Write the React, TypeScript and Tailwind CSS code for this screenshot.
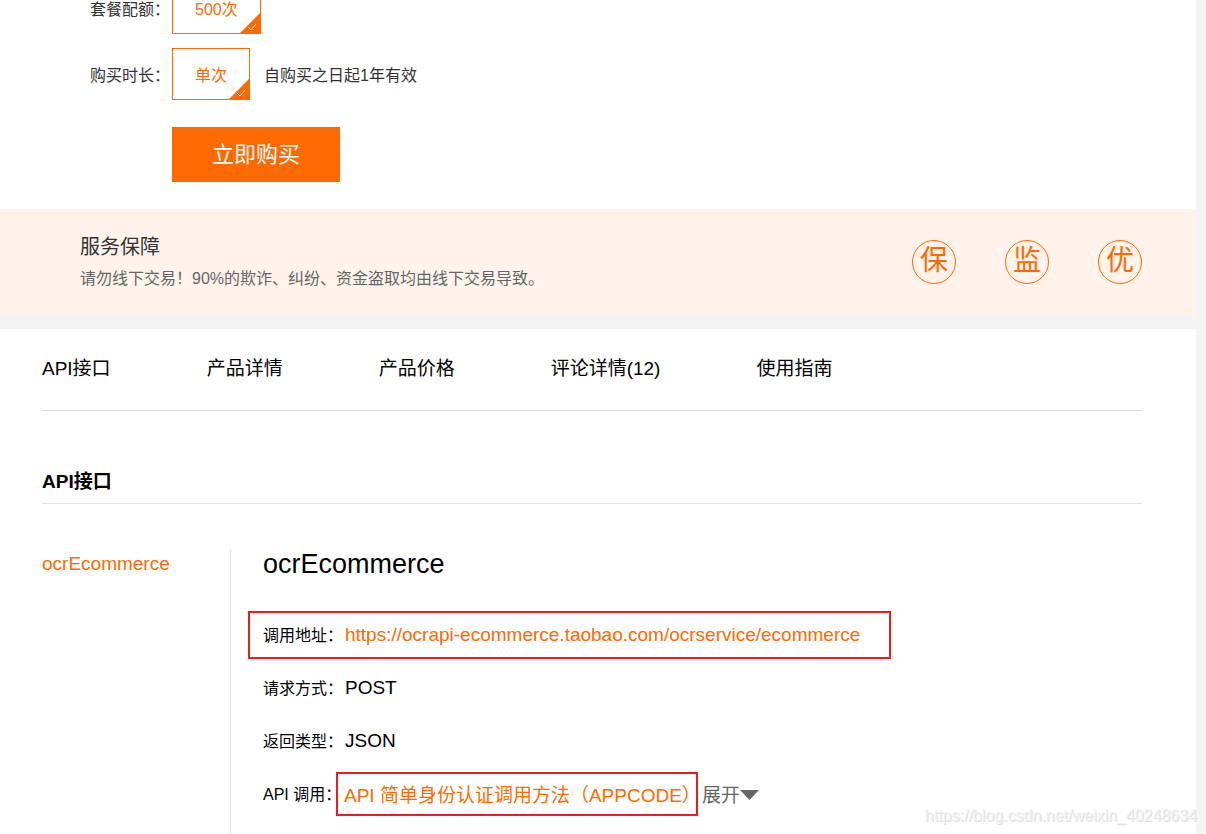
import type { ReactNode } from "react";

const tabs = ["API接口", "产品详情", "产品价格", "评论详情(12)", "使用指南"];
const guarantees = ["保", "监", "优"];

function Option({ name, children }: { name: string; children: ReactNode }) {
  return (
    <label className="relative flex h-[52px] shrink-0 items-center border border-[#ff6a00] px-[22px] pt-1 text-base leading-6 text-[#ff6a00]">
      <input type="radio" name={name} defaultChecked className="sr-only" />
      {children}
      <svg className="absolute right-0 bottom-0 h-5 w-5" viewBox="0 0 20 20" aria-hidden="true">
        <path d="M20 0V20H0Z" fill="#ff6a00" />
        <path d="M8 14L11 17L16 11" fill="none" stroke="#fff" strokeWidth="1" />
      </svg>
    </label>
  );
}

function Detail({ label, children }: { label: string; children: ReactNode }) {
  return (
    <div className="flex h-[53px] items-center whitespace-nowrap">
      <dt className="w-[82px] shrink-0 pt-0.5 text-base leading-6">{label}</dt>
      <dd className="flex items-center text-[19px] leading-6">{children}</dd>
    </div>
  );
}

export default function App() {
  return (
    <div className="relative flex min-h-screen bg-[#f4f4f4] pr-[10px] font-['Liberation_Sans','Noto_Sans_CJK_SC',sans-serif] text-black">
      <main className="flex min-w-0 flex-1 flex-col">
        <section className="bg-white pb-[27px] pl-[90px] text-base leading-6 text-[#333]">
          <div className="flex h-[34px] items-end overflow-hidden">
            <div className="flex items-center">
              <span className="w-[82px] pt-1">套餐配额：</span>
              <Option name="quota">500次</Option>
            </div>
          </div>
          <div className="mt-[14px] flex items-center">
            <span className="w-[82px] pt-1">购买时长：</span>
            <Option name="duration">单次</Option>
            <span className="ml-[14px] pt-1">自购买之日起1年有效</span>
          </div>
          <button
            type="button"
            className="mt-[27px] ml-[82px] block h-[55px] bg-[#ff6a00] px-10 text-[22px] leading-8 text-white"
          >
            立即购买
          </button>
        </section>

        <section className="flex h-[107px] items-center justify-between bg-[#fff3eb] pr-[54px] pb-0.5 pl-20">
          <div className="pt-0.5">
            <h2 className="text-xl leading-8 text-[#333]">服务保障</h2>
            <p className="text-base leading-8 text-[#666]">
              请勿线下交易！90%的欺诈、纠纷、资金盗取均由线下交易导致。
            </p>
          </div>
          <ul className="flex gap-[49px]">
            {guarantees.map((g) => (
              <li
                key={g}
                className="flex h-11 w-11 items-center justify-center rounded-full border border-[#ff6a00] pb-0.5 text-[28px] leading-8 text-[#ff6a00]"
              >
                {g}
              </li>
            ))}
          </ul>
        </section>

        <section className="mt-[13px] flex flex-1 flex-col bg-white pr-[54px] pl-[42px]">
          <nav className="flex h-[82px] gap-24 border-b border-[#ddd] pt-7 text-[19px] leading-6">
            {tabs.map((tab) => (
              <a key={tab} href="#api" className="whitespace-nowrap">
                {tab}
              </a>
            ))}
          </nav>
          <h2
            id="api"
            className="mt-[59px] h-[34px] border-b border-[#e6e6e6] text-[19px] leading-6 font-bold"
          >
            API接口
          </h2>
          <div className="mt-[45px] flex flex-1">
            <aside className="w-[188px] shrink-0 pt-[3px]">
              <a href="#ocr" className="text-[19px] leading-6 text-[#ff6a00]">
                ocrEcommerce
              </a>
            </aside>
            <article id="ocr" className="flex-1 border-l border-[#e6e6e6] pl-8">
              <h3 className="h-[60px] text-[27px] leading-[30px]">ocrEcommerce</h3>
              <dl>
                <div className="mt-0.5 -ml-[15px] flex h-12 w-fit items-center border-2 border-[#ed1c24] pr-[29px] pl-[13px]">
                  <Detail label="调用地址：">
                    <a
                      href="https://ocrapi-ecommerce.taobao.com/ocrservice/ecommerce"
                      className="text-[#ff6a00]"
                    >
                      https://ocrapi-ecommerce.taobao.com/ocrservice/ecommerce
                    </a>
                  </Detail>
                </div>
                <div className="mt-0.5">
                  <Detail label="请求方式：">POST</Detail>
                  <Detail label="返回类型：">JSON</Detail>
                  <Detail label="API 调用：">
                    <a
                      href="#appcode"
                      className="-ml-[9px] flex h-11 w-[362px] items-center border-2 border-[#ed1c24] pt-1 pl-1.5 text-[#ff6a00]"
                    >
                      API 简单身份认证调用方法（APPCODE）
                    </a>
                    <button type="button" className="ml-1 flex items-center pt-1 text-[#666]">
                      展开
                      <svg className="mb-0.5 h-[10px] w-[19px]" viewBox="0 0 19 10" aria-hidden="true">
                        <path d="M0 0H19L9.5 10Z" fill="#666" />
                      </svg>
                    </button>
                  </Detail>
                </div>
              </dl>
            </article>
          </div>
        </section>
      </main>
      <p className="absolute right-[9px] bottom-1.5 text-base leading-6 text-[#f2f2f2] [text-shadow:1px_1px_0_#dedede]">
        https://blog.csdn.net/weixin_40248634
      </p>
    </div>
  );
}
